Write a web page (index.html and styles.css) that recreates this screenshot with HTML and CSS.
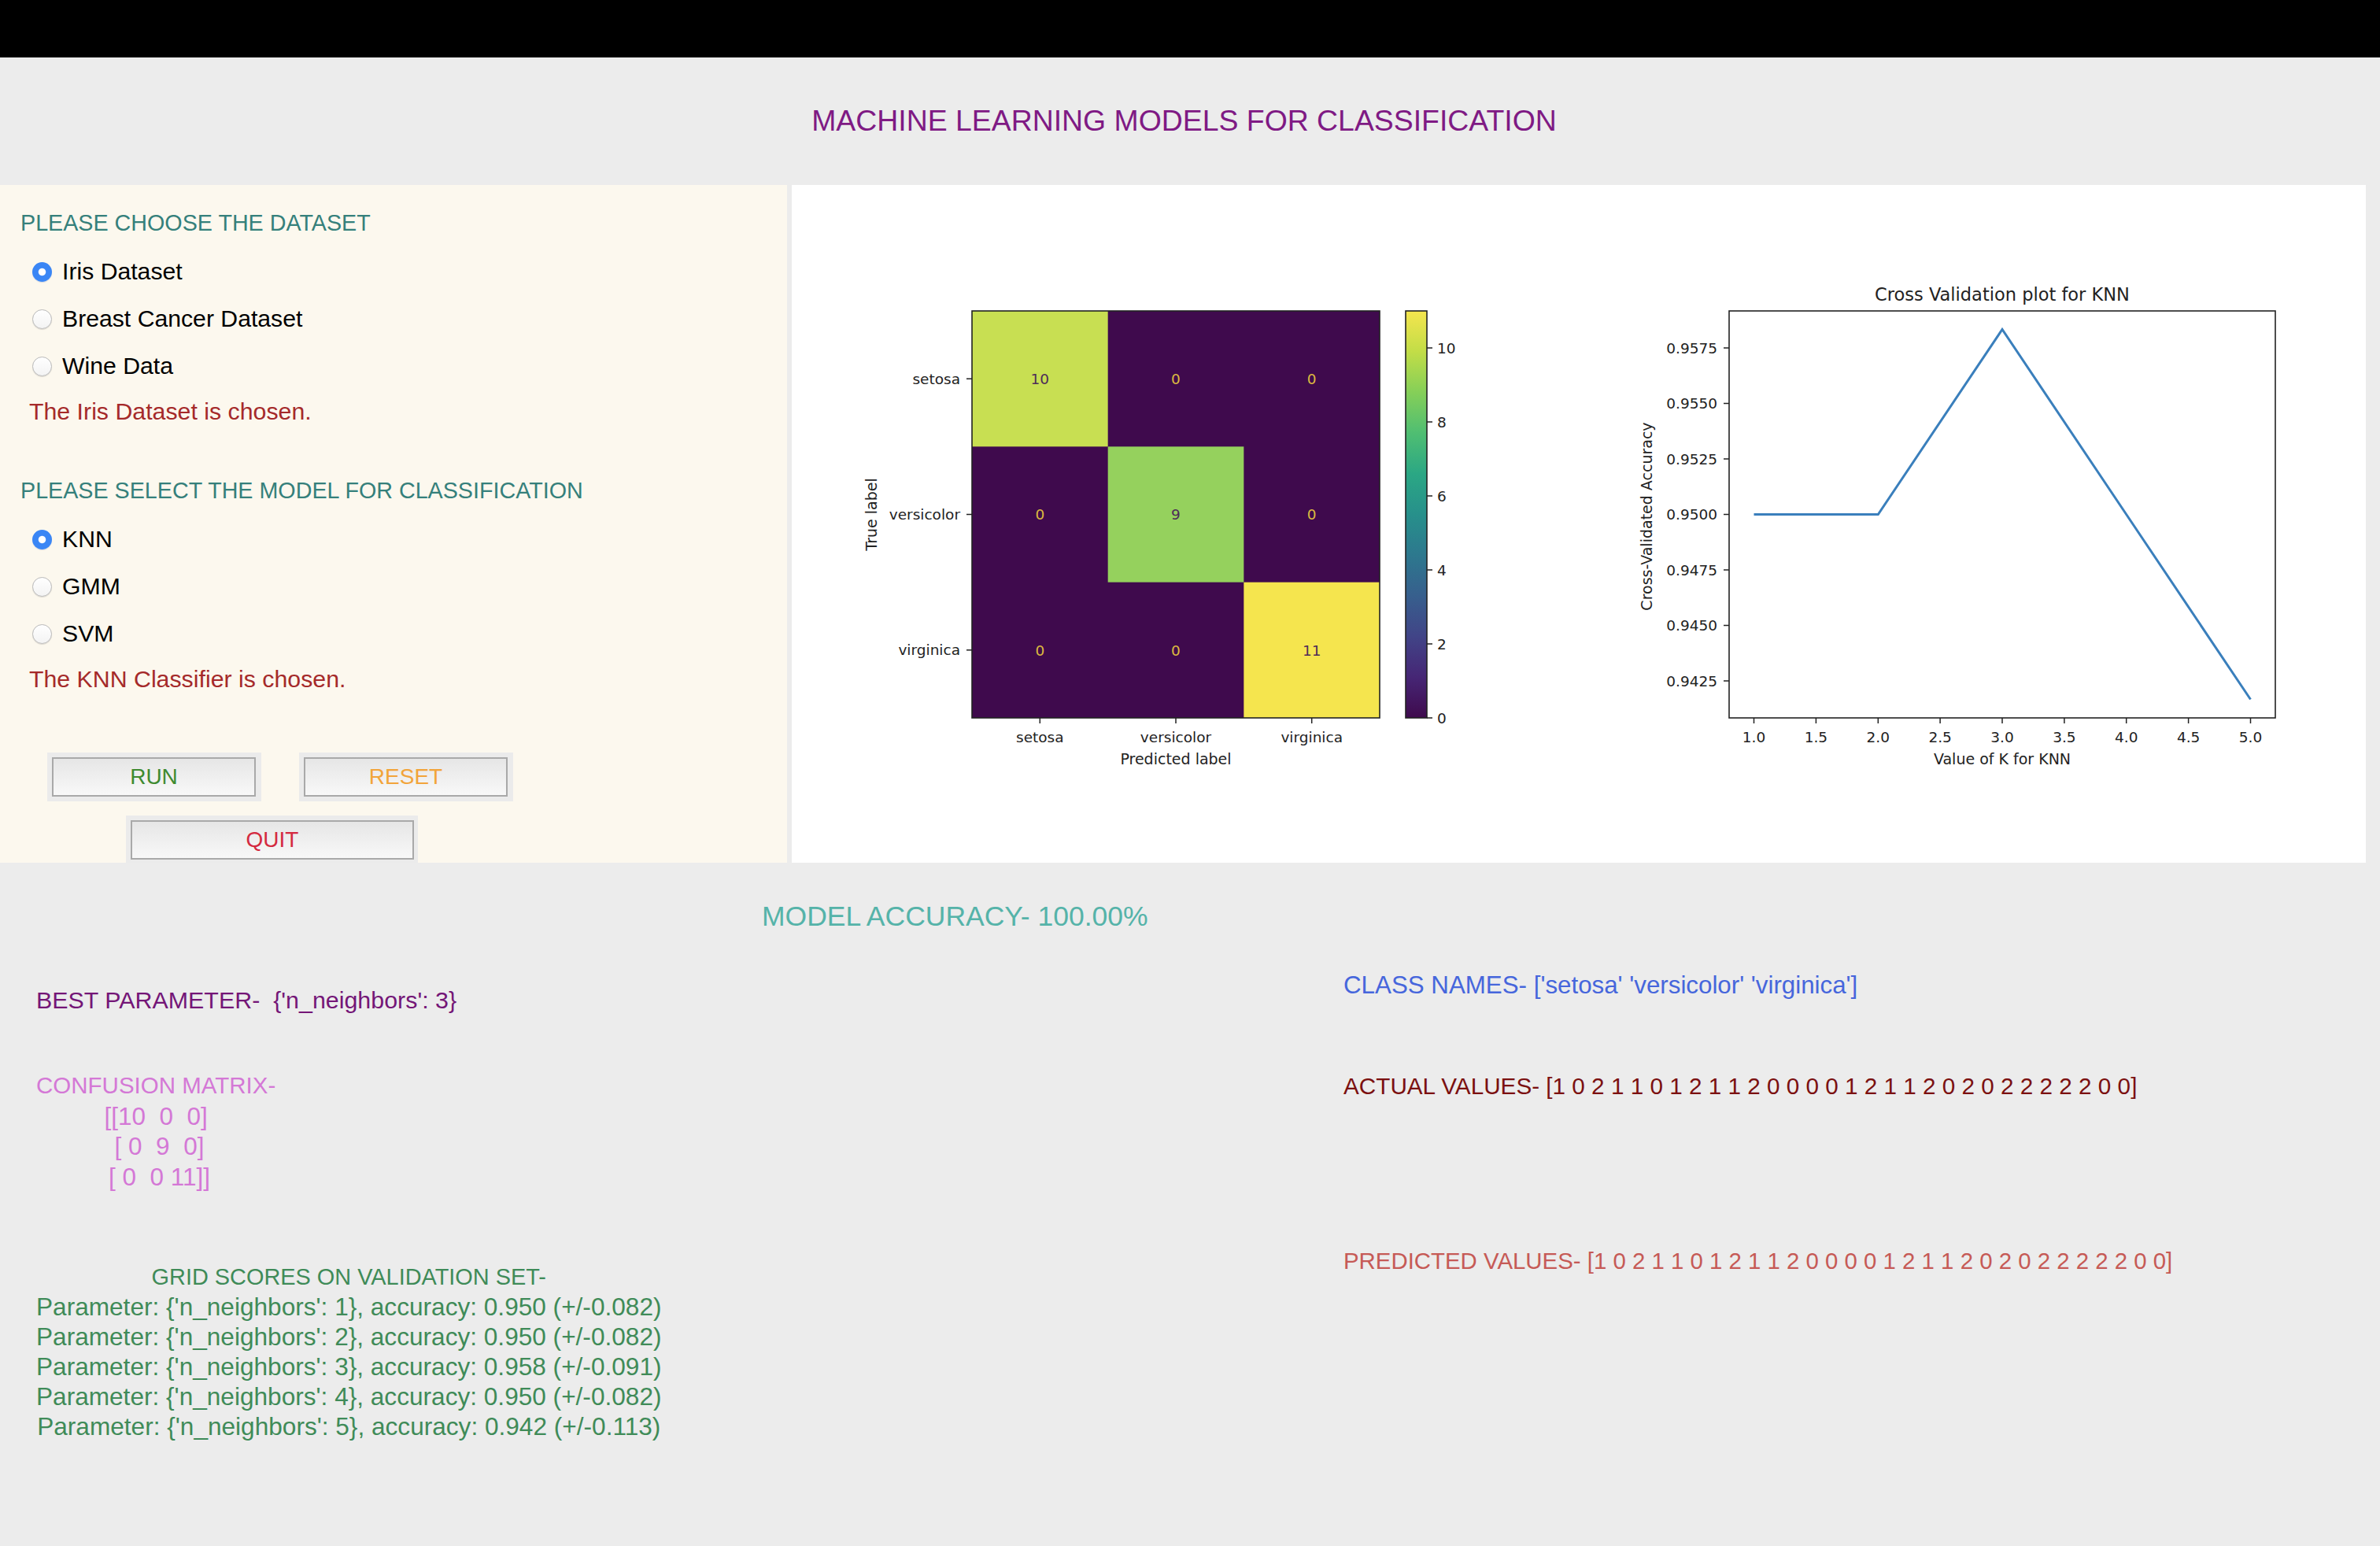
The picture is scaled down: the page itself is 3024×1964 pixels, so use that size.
FILE: index.html
```html
<!DOCTYPE html>
<html lang="en">
<head>
<meta charset="utf-8">
<title>Machine Learning Models for Classification</title>
<link rel="stylesheet" href="styles.css">
</head>
<body>
<div class="titlebar"></div>
<header class="header">
  <h1 class="title">MACHINE LEARNING MODELS FOR CLASSIFICATION</h1>
</header>

<main class="top">
  <section class="controls">
    <h2 class="heading">PLEASE CHOOSE THE DATASET</h2>
    <div class="options">
      <label class="option"><input type="radio" name="dataset" checked><span>Iris Dataset</span></label>
      <label class="option"><input type="radio" name="dataset"><span>Breast Cancer Dataset</span></label>
      <label class="option"><input type="radio" name="dataset"><span>Wine Data</span></label>
    </div>
    <p class="status">The Iris Dataset is chosen.</p>

    <h2 class="heading heading-model">PLEASE SELECT THE MODEL FOR CLASSIFICATION</h2>
    <div class="options">
      <label class="option"><input type="radio" name="model" checked><span>KNN</span></label>
      <label class="option"><input type="radio" name="model"><span>GMM</span></label>
      <label class="option"><input type="radio" name="model"><span>SVM</span></label>
    </div>
    <p class="status">The KNN Classifier is chosen.</p>

    <div class="buttons">
      <div class="btn-row">
        <span class="btn-frame"><button class="btn btn-run">RUN</button></span>
        <span class="btn-frame"><button class="btn btn-reset">RESET</button></span>
      </div>
      <div class="btn-row btn-row-quit">
        <span class="btn-frame btn-frame-wide"><button class="btn btn-quit">QUIT</button></span>
      </div>
    </div>
  </section>

  <section class="plots">
    <svg class="figure" width="2000" height="861" viewBox="0 0 2000 861" xmlns="http://www.w3.org/2000/svg">
      <defs>
        <linearGradient id="viridis" x1="0" y1="1" x2="0" y2="0">
          <stop offset="0" stop-color="#3f0a4d"/>
          <stop offset="0.1" stop-color="#462675"/>
          <stop offset="0.2" stop-color="#414487"/>
          <stop offset="0.3" stop-color="#375f8d"/>
          <stop offset="0.4" stop-color="#2d788e"/>
          <stop offset="0.5" stop-color="#27908b"/>
          <stop offset="0.6" stop-color="#2ba784"/>
          <stop offset="0.7" stop-color="#4fbe72"/>
          <stop offset="0.8" stop-color="#85cf58"/>
          <stop offset="0.9" stop-color="#c2dd47"/>
          <stop offset="1" stop-color="#f5e54e"/>
        </linearGradient>
      </defs>

      <!-- confusion matrix -->
      <rect x="229" y="160" width="518" height="517" fill="#3f0a4d"/>
      <rect x="229" y="160" width="172.67" height="172.33" fill="#c8df52"/>
      <rect x="401.67" y="332.33" width="172.67" height="172.33" fill="#95d15d"/>
      <rect x="574.33" y="504.67" width="172.67" height="172.33" fill="#f5e54e"/>
      <rect class="spine" x="229" y="160" width="518" height="517"/>

      <text class="cell cell-dark" x="315.3" y="252.5">10</text>
      <text class="cell cell-light" x="488" y="252.5">0</text>
      <text class="cell cell-light" x="660.7" y="252.5">0</text>
      <text class="cell cell-light" x="315.3" y="425">0</text>
      <text class="cell cell-dark" x="488" y="425">9</text>
      <text class="cell cell-light" x="660.7" y="425">0</text>
      <text class="cell cell-light" x="315.3" y="597.5">0</text>
      <text class="cell cell-light" x="488" y="597.5">0</text>
      <text class="cell cell-dark" x="660.7" y="597.5">11</text>

      <g class="ticks">
        <line x1="222" y1="246.2" x2="229" y2="246.2"/>
        <line x1="222" y1="418.5" x2="229" y2="418.5"/>
        <line x1="222" y1="590.8" x2="229" y2="590.8"/>
        <line x1="315.3" y1="677" x2="315.3" y2="684"/>
        <line x1="488" y1="677" x2="488" y2="684"/>
        <line x1="660.7" y1="677" x2="660.7" y2="684"/>
      </g>
      <text class="tick tick-end" x="214" y="252.7">setosa</text>
      <text class="tick tick-end" x="214" y="425">versicolor</text>
      <text class="tick tick-end" x="214" y="597.3">virginica</text>
      <text class="tick tick-mid" x="315.3" y="708">setosa</text>
      <text class="tick tick-mid" x="488" y="708">versicolor</text>
      <text class="tick tick-mid" x="660.7" y="708">virginica</text>
      <text class="axis-label" x="488" y="735.5">Predicted label</text>
      <text class="axis-label" transform="translate(108 418.5) rotate(-90)">True label</text>

      <!-- colorbar -->
      <rect x="780" y="160" width="27" height="517" fill="url(#viridis)"/>
      <rect class="spine" x="780" y="160" width="27" height="517"/>
      <g class="ticks">
        <line x1="807" y1="677" x2="814" y2="677"/>
        <line x1="807" y1="583" x2="814" y2="583"/>
        <line x1="807" y1="489" x2="814" y2="489"/>
        <line x1="807" y1="395" x2="814" y2="395"/>
        <line x1="807" y1="301" x2="814" y2="301"/>
        <line x1="807" y1="207" x2="814" y2="207"/>
      </g>
      <text class="tick" x="820" y="683.5">0</text>
      <text class="tick" x="820" y="589.5">2</text>
      <text class="tick" x="820" y="495.5">4</text>
      <text class="tick" x="820" y="401.5">6</text>
      <text class="tick" x="820" y="307.5">8</text>
      <text class="tick" x="820" y="213.5">10</text>

      <!-- cross validation plot -->
      <text class="plot-title" x="1538" y="146.5">Cross Validation plot for KNN</text>
      <polyline class="cv-line" points="1222.5,418.5 1380.3,418.5 1538,183.5 1695.7,418.5 1853.5,653.5"/>
      <rect class="spine" x="1191" y="160" width="694" height="517"/>
      <g class="ticks">
        <line x1="1184" y1="630" x2="1191" y2="630"/>
        <line x1="1184" y1="559.5" x2="1191" y2="559.5"/>
        <line x1="1184" y1="489" x2="1191" y2="489"/>
        <line x1="1184" y1="418.5" x2="1191" y2="418.5"/>
        <line x1="1184" y1="348" x2="1191" y2="348"/>
        <line x1="1184" y1="277.5" x2="1191" y2="277.5"/>
        <line x1="1184" y1="207" x2="1191" y2="207"/>
        <line x1="1222.5" y1="677" x2="1222.5" y2="684"/>
        <line x1="1301.4" y1="677" x2="1301.4" y2="684"/>
        <line x1="1380.3" y1="677" x2="1380.3" y2="684"/>
        <line x1="1459.1" y1="677" x2="1459.1" y2="684"/>
        <line x1="1538" y1="677" x2="1538" y2="684"/>
        <line x1="1616.9" y1="677" x2="1616.9" y2="684"/>
        <line x1="1695.7" y1="677" x2="1695.7" y2="684"/>
        <line x1="1774.6" y1="677" x2="1774.6" y2="684"/>
        <line x1="1853.5" y1="677" x2="1853.5" y2="684"/>
      </g>
      <text class="tick tick-end" x="1176" y="636.5">0.9425</text>
      <text class="tick tick-end" x="1176" y="566">0.9450</text>
      <text class="tick tick-end" x="1176" y="495.5">0.9475</text>
      <text class="tick tick-end" x="1176" y="425">0.9500</text>
      <text class="tick tick-end" x="1176" y="354.5">0.9525</text>
      <text class="tick tick-end" x="1176" y="284">0.9550</text>
      <text class="tick tick-end" x="1176" y="213.5">0.9575</text>
      <text class="tick tick-mid" x="1222.5" y="708">1.0</text>
      <text class="tick tick-mid" x="1301.4" y="708">1.5</text>
      <text class="tick tick-mid" x="1380.3" y="708">2.0</text>
      <text class="tick tick-mid" x="1459.1" y="708">2.5</text>
      <text class="tick tick-mid" x="1538" y="708">3.0</text>
      <text class="tick tick-mid" x="1616.9" y="708">3.5</text>
      <text class="tick tick-mid" x="1695.7" y="708">4.0</text>
      <text class="tick tick-mid" x="1774.6" y="708">4.5</text>
      <text class="tick tick-mid" x="1853.5" y="708">5.0</text>
      <text class="axis-label" x="1538" y="735.5">Value of K for KNN</text>
      <text class="axis-label" transform="translate(1093 421) rotate(-90)">Cross-Validated Accuracy</text>
    </svg>
  </section>
</main>

<section class="results">
  <p class="accuracy">MODEL ACCURACY- 100.00%</p>
  <div class="result-cols">
    <div class="col-left">
      <p class="best">BEST PARAMETER-  {'n_neighbors': 3}</p>
      <div class="cm">
        <div class="cm-head">CONFUSION MATRIX-</div>
        <div class="cm-row">[[10  0  0]</div>
        <div class="cm-row"> [ 0  9  0]</div>
        <div class="cm-row"> [ 0  0 11]]</div>
      </div>
      <div class="grid-scores">
        <div class="gs-head">GRID SCORES ON VALIDATION SET-</div>
        <div class="gs-row">Parameter: {'n_neighbors': 1}, accuracy: 0.950 (+/-0.082)</div>
        <div class="gs-row">Parameter: {'n_neighbors': 2}, accuracy: 0.950 (+/-0.082)</div>
        <div class="gs-row">Parameter: {'n_neighbors': 3}, accuracy: 0.958 (+/-0.091)</div>
        <div class="gs-row">Parameter: {'n_neighbors': 4}, accuracy: 0.950 (+/-0.082)</div>
        <div class="gs-row">Parameter: {'n_neighbors': 5}, accuracy: 0.942 (+/-0.113)</div>
      </div>
    </div>
    <div class="col-right">
      <p class="class-names">CLASS NAMES- ['setosa' 'versicolor' 'virginica']</p>
      <p class="actual">ACTUAL VALUES- [1 0 2 1 1 0 1 2 1 1 2 0 0 0 0 1 2 1 1 2 0 2 0 2 2 2 2 2 0 0]</p>
      <p class="predicted">PREDICTED VALUES- [1 0 2 1 1 0 1 2 1 1 2 0 0 0 0 1 2 1 1 2 0 2 0 2 2 2 2 2 0 0]</p>
    </div>
  </div>
</section>
</body>
</html>
```

FILE: styles.css
```css
* { box-sizing: border-box; }

html, body {
  margin: 0;
  padding: 0;
}

body {
  width: 3024px;
  height: 1964px;
  background: #ececec;
  font-family: "Liberation Sans", Arial, sans-serif;
  color: #000;
  overflow: hidden;
}

p { margin: 0; }

/* top black strip */
.titlebar {
  height: 73px;
  background: #000;
}

/* title area */
.header {
  height: 162px;
  display: flex;
  align-items: center;
  justify-content: center;
  padding-right: 15px;
}

.title {
  margin: 0;
  font-size: 37.4px;
  font-weight: normal;
  line-height: 1;
  color: #7f1a84;
}

/* top row: controls + plots */
.top {
  display: flex;
  gap: 6px;
  height: 861px;
}

.controls {
  width: 1000px;
  flex: none;
  background: #fcf8ee;
  padding-top: 18px;
  overflow: hidden;
}

.heading {
  margin: 0;
  padding-left: 26px;
  height: 60px;
  line-height: 60px;
  font-size: 28.7px;
  font-weight: normal;
  color: #35807b;
  white-space: nowrap;
}

.heading-model { margin-top: 42px; }

.options { margin-top: 2px; }

.option {
  display: flex;
  align-items: center;
  height: 60px;
  padding-left: 41px;
  font-size: 30.2px;
  color: #000;
}

.option input {
  appearance: none;
  -webkit-appearance: none;
  width: 25px;
  height: 25px;
  margin: 0 13px 0 0;
  border-radius: 50%;
  border: 1px solid #b9b9b9;
  background: linear-gradient(#ffffff, #f3f3f3);
  box-shadow: 0 1px 1px rgba(0, 0, 0, 0.12);
  flex: none;
}

.option input:checked {
  border: none;
  background: radial-gradient(circle, #ffffff 0 4.2px, #3a86f5 5.2px);
  box-shadow: 0 1px 1px rgba(0, 40, 120, 0.15);
}

.status {
  height: 56px;
  line-height: 56px;
  padding-left: 37px;
  font-size: 30.3px;
  color: #a52a2a;
  white-space: nowrap;
}

.buttons { margin-top: 65px; }

.btn-row {
  display: flex;
  gap: 48px;
  padding-left: 60px;
}

.btn-row-quit {
  margin-top: 18px;
  padding-left: 160px;
}

.btn-frame {
  display: block;
  width: 272px;
  height: 62px;
  padding: 6px 7px 6px 6px;
  background: #ebebeb;
}

.btn-frame-wide {
  width: 371px;
  padding-right: 5px;
}

.btn {
  display: block;
  width: 100%;
  height: 100%;
  margin: 0;
  padding: 0;
  border: 2px solid #a9a9a9;
  background: linear-gradient(#e6e6e6, #f8f8f8);
  font-family: "Liberation Sans", Arial, sans-serif;
  font-size: 28px;
  line-height: 1;
}

.btn-run { color: #3e8a30; }
.btn-reset { color: #f2a43a; }
.btn-quit { color: #d42a40; }

.plots {
  width: 2000px;
  flex: none;
  background: #ffffff;
}

.figure { display: block; }

/* svg chart styles */
.spine {
  fill: none;
  stroke: #222;
  stroke-width: 1.6;
}

.ticks line {
  stroke: #222;
  stroke-width: 1.5;
}

.tick {
  font-family: "DejaVu Sans", sans-serif;
  font-size: 18.5px;
  fill: #222;
}

.tick-end { text-anchor: end; }
.tick-mid { text-anchor: middle; }

.axis-label {
  font-family: "DejaVu Sans", sans-serif;
  font-size: 19px;
  fill: #222;
  text-anchor: middle;
}

.plot-title {
  font-family: "DejaVu Sans", sans-serif;
  font-size: 22.5px;
  fill: #222;
  text-anchor: middle;
}

.cell {
  font-family: "DejaVu Sans", sans-serif;
  font-size: 18.5px;
  text-anchor: middle;
}

.cell-dark { fill: #4d2c58; }
.cell-light { fill: #dcb940; }

.cv-line {
  fill: none;
  stroke: #3a7fbc;
  stroke-width: 3;
  stroke-linejoin: miter;
}

/* results area */
.results {
  padding-top: 38px;
}

.accuracy {
  height: 60px;
  line-height: 60px;
  padding-left: 968px;
  font-size: 35.5px;
  color: #55b3a9;
  white-space: nowrap;
}

.result-cols {
  display: flex;
}

.col-left {
  width: 1707px;
  flex: none;
  padding-left: 46px;
  display: flex;
  flex-direction: column;
  align-items: flex-start;
}

.best {
  margin-top: 46px;
  height: 60px;
  line-height: 60px;
  font-size: 30.4px;
  color: #741677;
  white-space: pre;
}

.cm {
  margin-top: 60px;
  text-align: center;
  color: #d478d6;
  line-height: 38.7px;
}

.cm-head { font-size: 29.5px; white-space: nowrap; }
.cm-row { font-size: 31.5px; white-space: pre; }

.grid-scores {
  margin-top: 88px;
  text-align: center;
  color: #3f8b58;
  line-height: 38px;
}

.gs-head { font-size: 28.9px; white-space: nowrap; }
.gs-row { font-size: 31.6px; white-space: pre; }

.col-right {
  display: flex;
  flex-direction: column;
  align-items: flex-start;
}

.class-names,
.actual,
.predicted {
  height: 60px;
  line-height: 60px;
  white-space: pre;
}

.class-names {
  margin-top: 28px;
  font-size: 31.3px;
  color: #4666dc;
}

.actual {
  margin-top: 68px;
  font-size: 29.7px;
  color: #7b1010;
}

.predicted {
  margin-top: 162px;
  font-size: 29.4px;
  color: #c65a56;
}
```
